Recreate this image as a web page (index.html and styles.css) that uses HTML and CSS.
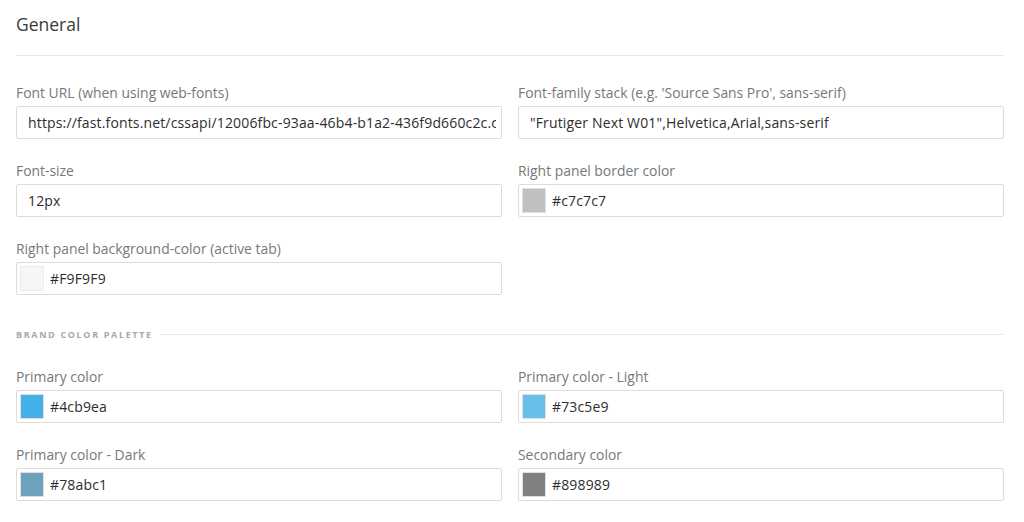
FILE: index.html
```html
<!DOCTYPE html>
<html lang="en">
<head>
<meta charset="utf-8">
<title>General</title>
<link rel="stylesheet" href="styles.css">
</head>
<body>
<div class="page">
  <h2 class="title">General</h2>
  <div class="divider"></div>
  <div class="grid grid-first">
    <div class="field">
      <label class="label">Font URL (when using web-fonts)</label>
      <div class="input"><span class="value">https://fast.fonts.net/cssapi/12006fbc-93aa-46b4-b1a2-436f9d660c2c.css</span></div>
    </div>
    <div class="field">
      <label class="label">Font-family stack (e.g. 'Source Sans Pro', sans-serif)</label>
      <div class="input"><span class="value">"Frutiger Next W01",Helvetica,Arial,sans-serif</span></div>
    </div>
    <div class="field">
      <label class="label">Font-size</label>
      <div class="input"><span class="value">12px</span></div>
    </div>
    <div class="field">
      <label class="label">Right panel border color</label>
      <div class="input input-color"><span class="swatch" style="background:#c0c0c0"></span><span class="value">#c7c7c7</span></div>
    </div>
    <div class="field">
      <label class="label">Right panel background-color (active tab)</label>
      <div class="input input-color"><span class="swatch swatch-light" style="background:#f6f6f6"></span><span class="value">#F9F9F9</span></div>
    </div>
  </div>
  <div class="subhead"><span class="subhead-text">BRAND COLOR PALETTE</span><span class="subhead-line"></span></div>
  <div class="grid grid-second">
    <div class="field">
      <label class="label">Primary color</label>
      <div class="input input-color"><span class="swatch" style="background:#44b0e8"></span><span class="value">#4cb9ea</span></div>
    </div>
    <div class="field">
      <label class="label">Primary color - Light</label>
      <div class="input input-color"><span class="swatch" style="background:#68bfe9"></span><span class="value">#73c5e9</span></div>
    </div>
    <div class="field">
      <label class="label">Primary color - Dark</label>
      <div class="input input-color"><span class="swatch" style="background:#6ca2bd"></span><span class="value">#78abc1</span></div>
    </div>
    <div class="field">
      <label class="label">Secondary color</label>
      <div class="input input-color"><span class="swatch" style="background:#808080"></span><span class="value">#898989</span></div>
    </div>
  </div>
</div>
</body>
</html>
```

FILE: styles.css
```css
* { box-sizing: border-box; }
html, body { margin: 0; padding: 0; background: #ffffff; }
body {
  font-family: "Open Sans", Lato, "Liberation Sans", sans-serif;
  color: #333333;
}
.page {
  width: 988px;
  margin-left: 16px;
}
.title {
  margin: 12px 0 0;
  font-size: 17.5px;
  line-height: 24px;
  font-weight: 400;
  color: #3a3a3a;
}
.divider {
  margin-top: 19px;
  border-top: 1px solid #e6e6e6;
}
.grid {
  display: grid;
  grid-template-columns: minmax(0, 1fr) minmax(0, 1fr);
  column-gap: 16px;
  row-gap: 23px;
}
.grid-first { margin-top: 28px; }
.grid-second { margin-top: 27px; }
.field {
  display: flex;
  flex-direction: column;
  gap: 4px;
  min-width: 0;
}
.label {
  font-size: 13.9px;
  line-height: 18px;
  color: #787878;
  white-space: nowrap;
}
.input {
  height: 33px;
  border: 1px solid #dcdcdc;
  border-radius: 2px;
  display: flex;
  align-items: center;
  padding: 0 5px 0 11px;
  overflow: hidden;
  white-space: nowrap;
  min-width: 0;
}
.input-color { padding: 0 3px; }
.value {
  font-size: 14px;
  color: #2e2e2e;
  letter-spacing: 0.15px;
  overflow: hidden;
  min-width: 0;
}
.swatch {
  flex: none;
  width: 24px;
  height: 25px;
  margin-right: 6px;
  border: 1px solid #e0e0e0;
}
.swatch-light { border-color: #ececec; }
.subhead {
  margin-top: 32px;
  display: flex;
  align-items: center;
  gap: 8px;
  height: 14px;
}
.subhead-text {
  font-size: 9px;
  letter-spacing: 1.65px;
  color: #a8a8a8;
  font-weight: 700;
  white-space: nowrap;
}
.subhead-line {
  flex: 1;
  border-top: 1px solid #e6e6e6;
}
```
